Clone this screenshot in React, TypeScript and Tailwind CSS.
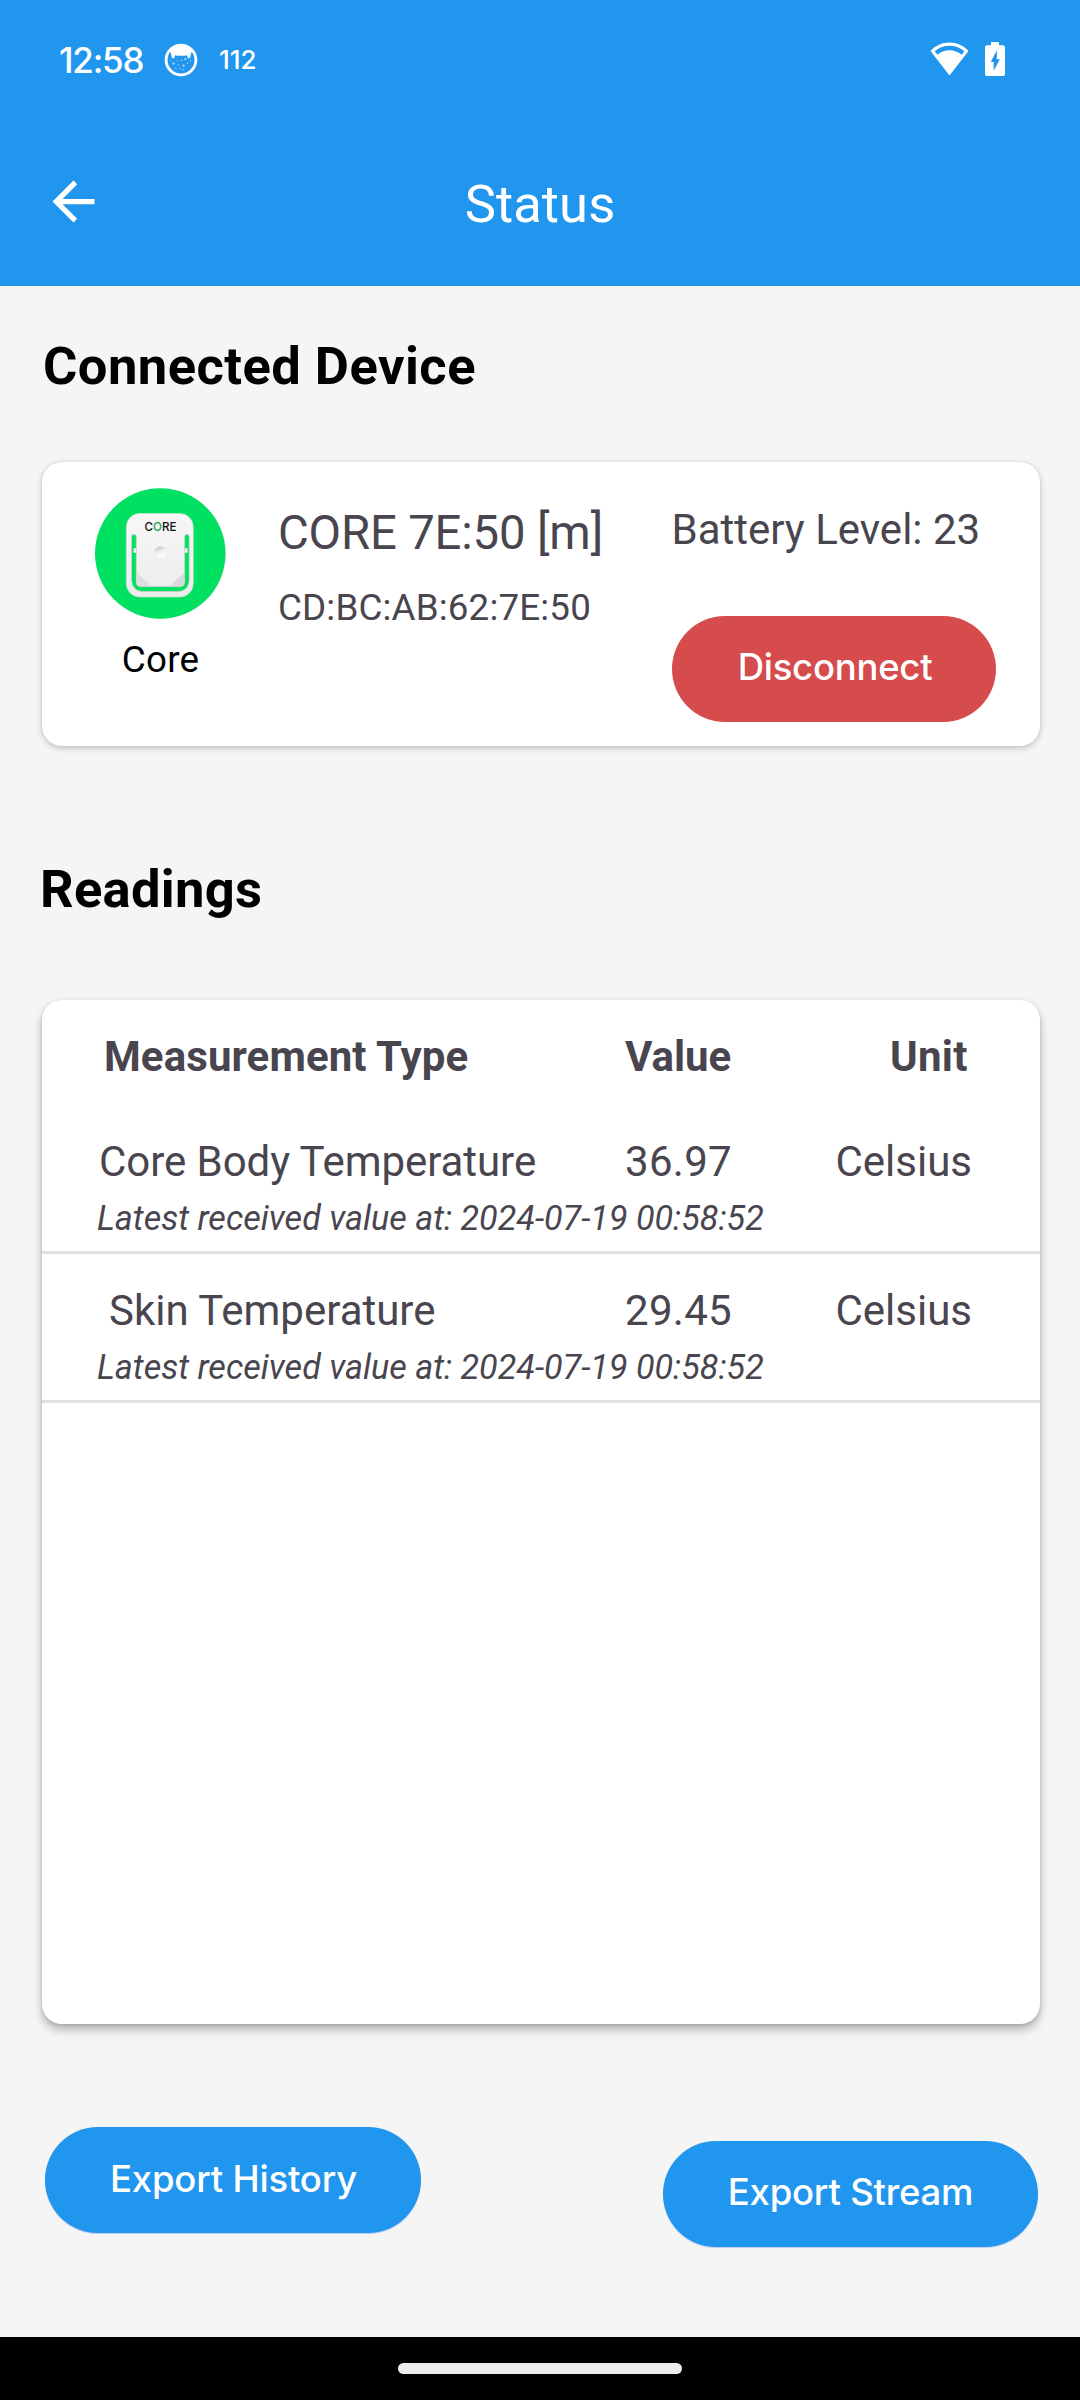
import React from "react";

type Reading = { name: string; inset: string; value: string; unit: string; time: string };

const readings: Reading[] = [
  { name: "Core Body Temperature", inset: "pl-[57px] tracking-[-0.06px]", value: "36.97", unit: "Celsius", time: "2024-07-19 00:58:52" },
  { name: "Skin Temperature", inset: "pl-[67px]", value: "29.45", unit: "Celsius", time: "2024-07-19 00:58:52" },
];

function FaceIcon() {
  return (
    <svg className="h-[34px] w-[34px]" viewBox="0 0 34 34" fill="none">
      <circle cx="17" cy="17" r="14.9" stroke="#fff" strokeWidth="2.8" />
      <path d="M5.500 9.500C8 4.500 12 2.300 17 2.300S26 4.500 28.500 9.500L27 9.500C27 11 26.600 13.300 25.900 15L24.300 15.500L22.600 12.200C21 13 13 13 11.400 12.200L9.700 15.500L8.100 15C7.400 13.300 7 11 7 9.500Z" fill="#fff" />
      <g fill="#fff" opacity="0.7">
        <circle cx="9.600" cy="20.600" r="1.100" />
        <circle cx="19.600" cy="22.600" r="1.100" />
        <circle cx="21.300" cy="16" r="1" />
        <circle cx="17.400" cy="17.300" r="0.700" />
        <circle cx="14.600" cy="21.800" r="0.600" />
        <circle cx="23.500" cy="20.300" r="0.700" />
        <circle cx="11.800" cy="25.300" r="0.700" />
        <circle cx="16.200" cy="25.600" r="0.700" />
        <circle cx="19.200" cy="26.600" r="0.700" />
        <circle cx="13.200" cy="18" r="0.500" />
        <circle cx="26.500" cy="17.500" r="0.600" />
        <circle cx="6.800" cy="17.500" r="0.500" />
      </g>
    </svg>
  );
}

function StatusBar() {
  return (
    <div className="flex h-[120px] items-center text-white">
      <span className="ml-[59px] w-[105px] font-['Inter'] text-[35px] leading-[40px] font-[550] tracking-[-1.2px]">12:58</span>
      <FaceIcon />
      <span className="ml-[21px] font-['Inter'] text-[26px] leading-[30px] font-[550]">112</span>
      <div className="mr-[75px] mb-[2px] ml-auto flex items-start gap-[16px]">
        <svg className="h-[34px] w-[39px]" viewBox="0 0 39 34">
          <path fill="#fff" fillRule="evenodd" d="M19.500 0.500C12 0.500 5.500 3.500 0.500 9L19.500 33.500L38.500 9C33.500 3.500 27 0.500 19.500 0.500ZM19.500 3.800C25.500 3.800 30.500 5.800 34.300 9.300L31.600 12.700C28.200 9.700 24.200 8.200 19.500 8.200S10.800 9.700 7.400 12.700L4.700 9.300C8.500 5.800 13.500 3.800 19.500 3.800Z" />
        </svg>
        <svg className="h-[34px] w-[20px]" viewBox="0 0 20 34">
          <path fill="#fff" fillRule="evenodd" d="M6 0H14V3.300H18Q20 3.300 20 5.300V32Q20 34 18 34H2Q0 34 0 32V5.300Q0 3.300 2 3.300H6ZM11.800 8.300L5.800 20H8.700V28.800L14.800 17.200H11.800Z" />
        </svg>
      </div>
    </div>
  );
}

function AppBar() {
  return (
    <div className="grid h-[166px] grid-cols-[1fr_auto_1fr] items-center text-white">
      <svg className="-mt-[4px] ml-[42px] h-[63px] w-[63px]" viewBox="0 0 24 24" fill="#fff">
        <path d="M20 11H7.830l5.590-5.590L12 4l-8 8 8 8 1.410-1.410L7.830 13H20v-2z" />
      </svg>
      <h1 className="mt-[2px] text-[52.5px] leading-[60px] tracking-[0.1px]">Status</h1>
      <span />
    </div>
  );
}

function DeviceIcon() {
  return (
    <svg className="h-[131px] w-[131px]" viewBox="0 0 131 131">
      <defs>
        <linearGradient id="shell" x1="0" y1="0" x2="0" y2="1">
          <stop offset="0" stopColor="#f7f7f7" />
          <stop offset="1" stopColor="#ececec" />
        </linearGradient>
        <linearGradient id="dimple" x1="0.200" y1="0" x2="0.600" y2="1">
          <stop offset="0" stopColor="#bdbdbd" />
          <stop offset="0.500" stopColor="#f2f2f2" />
          <stop offset="1" stopColor="#ffffff" />
        </linearGradient>
      </defs>
      <circle cx="66.200" cy="65.700" r="64.800" fill="#cfe0d6" />
      <circle cx="65.200" cy="65.500" r="65.200" fill="#00e162" />
      <rect x="31.300" y="25.500" width="67" height="83.500" rx="13.500" fill="url(#shell)" stroke="#dcdcdc" strokeWidth="0.600" />
      <path d="M36.500 48.500Q36.500 46.300 39 46.300Q41.300 46.300 41.300 48.500V94Q41.300 98.600 46 98.600H85Q89.600 98.600 89.600 94V48.500Q89.600 46.300 92 46.300Q94.200 46.300 94.200 48.500V91C94.200 99 90 103.600 82 103.600H49C41 103.600 36.500 99 36.500 91Z" fill="#00e162" stroke="#cfcfcf" strokeWidth="0.800" />
      <path d="M41.600 85L57 98.200H46Q41.600 98.200 41.600 94Z" fill="#dedede" />
      <path d="M89.300 85L74.500 98.200H85Q89.300 98.200 89.300 94Z" fill="#dadada" />
      <rect x="38.500" y="60" width="2.600" height="5" rx="1.300" fill="#f4f4f4" />
      <rect x="90" y="60" width="2.600" height="5" rx="1.300" fill="#f4f4f4" />
      <circle cx="65.500" cy="64.500" r="6" fill="url(#dimple)" />
      <text x="49.500" y="43.200" fontFamily="Inter" fontSize="12" fontWeight="500" textLength="32" lengthAdjust="spacingAndGlyphs" fill="#111">
        C<tspan fill="#14a455">O</tspan>RE
      </text>
    </svg>
  );
}

function DeviceCard() {
  return (
    <section className="mt-[66px] mr-[40px] ml-[42px] flex h-[284px] rounded-[20px] bg-white text-[#49454f] shadow-[0_2px_6px_rgba(0,0,0,0.22),0_0_2px_rgba(0,0,0,0.1)]">
      <div className="ml-[53px] flex w-[131px] flex-col items-center pt-[26px]">
        <DeviceIcon />
        <span className="mt-[19px] text-[36.75px] leading-[44px] tracking-[0.2px] text-black">Core</span>
      </div>
      <div className="ml-[52px] w-[393.500px] pt-[43px] whitespace-nowrap">
        <div className="text-[47.25px] leading-[56px] tracking-[-0.15px]">CORE 7E:50 [m]</div>
        <div className="mt-[25px] text-[36.75px] leading-[44px] tracking-[0.15px]">CD:BC:AB:62:7E:50</div>
      </div>
      <div className="pt-[43px]">
        <div className="text-[42px] leading-[50px] whitespace-nowrap">Battery Level: 23</div>
        <button className="mt-[61px] ml-[0.500px] flex h-[106px] w-[324px] items-center justify-center rounded-full bg-[#d64c4d] pb-[3px] pl-[2px] font-['Inter'] text-[36.5px] font-[550] tracking-[-0.25px] text-white">
          Disconnect
        </button>
      </div>
    </section>
  );
}

function ReadingRow({ reading }: { reading: Reading }) {
  return (
    <div className="h-[149px] border-b-[3px] border-[#e0e0e0] pt-[32px]">
      <div className="grid grid-cols-[583px_210.500px_1fr] text-[42px] leading-[50px]">
        <span className={reading.inset}>{reading.name}</span>
        <span className="tracking-[0.3px]">{reading.value}</span>
        <span>{reading.unit}</span>
      </div>
      <div className="mt-[10px] pl-[55px] text-[34.125px] leading-[42px] italic">Latest received value at: {reading.time}</div>
    </div>
  );
}

function ReadingsCard() {
  return (
    <section className="mt-[81px] mr-[40px] ml-[42px] h-[1024px] rounded-[20px] bg-white text-[#49454f] shadow-[0_6px_10px_rgba(0,0,0,0.26),0_1px_4px_rgba(0,0,0,0.12)]">
      <div className="grid h-[105px] grid-cols-[583px_265px_1fr] pt-[32px] text-[42px] leading-[50px] font-bold">
        <span className="pl-[62px] tracking-[0.1px]">Measurement Type</span>
        <span>Value</span>
        <span className="tracking-[0.3px]">Unit</span>
      </div>
      {readings.map((r) => (
        <ReadingRow key={r.name} reading={r} />
      ))}
    </section>
  );
}

function ExportButtons() {
  return (
    <div className="mt-[103px] mr-[42px] ml-[44.500px] flex items-start justify-between font-['Inter'] text-[36.5px] font-[550] tracking-[-0.2px] text-white">
      <button className="flex h-[106px] w-[376px] items-center justify-center rounded-full bg-[#2196ee] pb-[2px] pl-[2px] shadow-[0_1px_1px_rgba(80,120,240,0.35)]">Export History</button>
      <button className="mt-[14px] flex h-[106px] w-[375px] items-center justify-center rounded-full bg-[#2196ee] pb-[3px] shadow-[0_1px_1px_rgba(80,120,240,0.35)]">Export Stream</button>
    </div>
  );
}

export default function App() {
  return (
    <div className="flex h-[2400px] w-[1080px] flex-col overflow-hidden bg-[#f5f5f5] font-['Roboto',sans-serif]">
      <header className="h-[286px] bg-[#2196ee]">
        <StatusBar />
        <AppBar />
      </header>
      <main className="flex-1">
        <h2 className="mt-[50px] ml-[43px] text-[52.5px] leading-[60px] font-bold tracking-[0.46px] text-black">Connected Device</h2>
        <DeviceCard />
        <h2 className="mt-[113px] ml-[40px] text-[52.5px] leading-[60px] font-bold tracking-[0.3px] text-black">Readings</h2>
        <ReadingsCard />
        <ExportButtons />
      </main>
      <footer className="flex h-[63px] items-center justify-center bg-black">
        <div className="h-[11px] w-[284px] rounded-full bg-[#ececec]" />
      </footer>
    </div>
  );
}
